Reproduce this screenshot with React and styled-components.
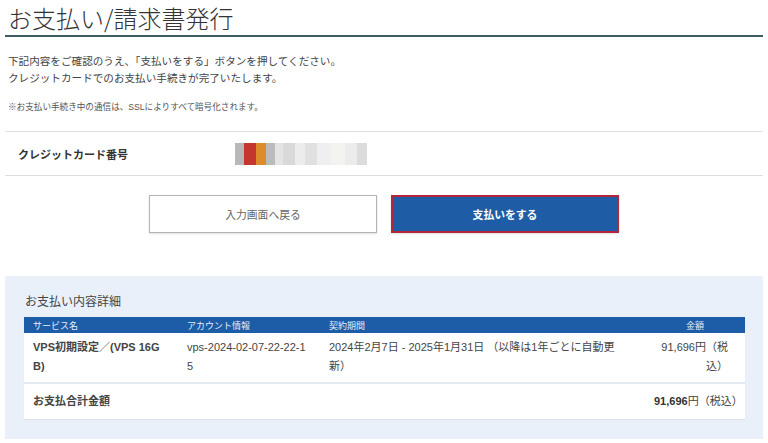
import React from 'react'
import styled, { createGlobalStyle } from 'styled-components';

const Global = createGlobalStyle`
body {
  margin: 0;
  background: #fff;
  font-family: "Liberation Sans", "Noto Sans CJK JP", sans-serif;
  color: #333;
}
`;

const Page = styled.div`
width: 758px;
margin-left: 5px;
padding-top: 3px;
`;
const Title = styled.h1`
margin: 0;
padding: 0 0 2px 3px;
font-size: 24px;
font-weight: 300;
line-height: 30px;
color: #333;
border-bottom: 2px solid #3f5e61;
font-family: "Noto Sans CJK JP", sans-serif;
`;
const Lead = styled.p`
margin: 16px 0 0 3px;
font-size: 10.6px;
line-height: 17px;
color: #444;
`;
const Note = styled.p`
margin: 13px 0 0 3px;
font-size: 8.6px;
line-height: 14px;
color: #555;
`;
const InfoRow = styled.div`
margin-top: 17px;
height: 43px;
display: flex;
align-items: center;
border-top: 1px solid #dedede;
border-bottom: 1px solid #dedede;
`;
const Label = styled.div`
width: 217px;
padding-left: 13px;
font-size: 11px;
font-weight: bold;
color: #333;
`;
const Blur = styled.div`
display: flex;
height: 22px;
filter: blur(0.6px);
`;
const Swatch = styled.span`
width: ${p => p.w}px;
background: ${p => p.c};
`;
const Actions = styled.div`
display: flex;
justify-content: center;
gap: 14px;
margin-top: 19px;
`;
const Button = styled.button`
width: 228px;
height: 38px;
font-family: inherit;
font-size: 10.8px;
cursor: pointer;
border: ${p => p.primary ? '2px solid #b2253c' : '1px solid #b3b3b3'};
background: ${p => p.primary ? '#1e5ca5' : '#fff'};
color: ${p => p.primary ? '#fff' : '#666'};
font-weight: ${p => p.primary ? 'bold' : 'normal'};
box-shadow: 0 1px 2px rgba(0,0,0,0.12);
`;
const Panel = styled.section`
margin-top: 43px;
background: #e9f0f9;
padding: 18px 18px 20px 19px;
`;
const PanelTitle = styled.h2`
margin: 0 0 7px 1px;
font-size: 12px;
font-weight: normal;
line-height: 16px;
color: #444;
`;
const Table = styled.table`
width: 100%;
border-collapse: collapse;
background: #fff;
table-layout: fixed;
box-shadow: 0 1px 1px rgba(0,0,0,0.06);
`;
const Col = styled.col`
width: ${p => p.w ? p.w + 'px' : 'auto'};
`;
const Th = styled.th`
background: #1d5ca6;
color: #e6eefa;
font-size: 9px;
font-weight: normal;
height: 16px;
padding: 0 9px;
text-align: ${p => p.right ? 'center' : 'left'};
`;
const Td = styled.td`
padding: ${p => p.pad || '5px'} ${p => p.right ? '17px' : (p.pr || '9px')} ${p => p.pad || '6px'} 9px;
font-size: 11px;
line-height: 19px;
color: #444;
vertical-align: top;
text-align: ${p => p.right ? 'right' : 'left'};
font-weight: ${p => p.bold ? 'bold' : 'normal'};
word-break: break-all;
`;
const Tr = styled.tr`
border-top: ${p => p.sep ? '2px solid #e4eaf2' : 'none'};
`;
const Strong = styled.b`
font-weight: bold;
color: #333;
`;

const card = [
  [9, '#b8b8b8'], [12, '#c3372c'], [10, '#dc8c2b'], [9, '#b9bbbd'],
  [8, '#e4e4e4'], [12, '#d9d9d9'], [10, '#ececec'], [12, '#e0e0e0'],
  [14, '#efefef'], [14, '#f3f3f0'], [12, '#ececec'], [10, '#dcdcdc'],
];

const App = () => {
  return (
    <Page>
      <Global />
      <Title>お支払い/請求書発行</Title>
      <Lead>
        下記内容をご確認のうえ、「支払いをする」ボタンを押してください。<br />
        クレジットカードでのお支払い手続きが完了いたします。
      </Lead>
      <Note>※お支払い手続き中の通信は、SSLによりすべて暗号化されます。</Note>
      <InfoRow>
        <Label>クレジットカード番号</Label>
        <Blur>
          {card.map(([w, c], i) => <Swatch key={i} w={w} c={c} />)}
        </Blur>
      </InfoRow>
      <Actions>
        <Button>入力画面へ戻る</Button>
        <Button primary>支払いをする</Button>
      </Actions>
      <Panel>
        <PanelTitle>お支払い内容詳細</PanelTitle>
        <Table>
          <colgroup>
            <Col w={154} />
            <Col w={142} />
            <Col />
            <Col w={100} />
          </colgroup>
          <thead>
            <tr>
              <Th>サービス名</Th>
              <Th>アカウント情報</Th>
              <Th>契約期間</Th>
              <Th right>金額</Th>
            </tr>
          </thead>
          <tbody>
            <Tr>
              <Td bold pr="18px">VPS初期設定／(VPS 16GB)</Td>
              <Td>vps-2024-02-07-22-22-15</Td>
              <Td pr="24px">2024年2月7日 - 2025年1月31日 （以降は1年ごとに自動更新）</Td>
              <Td right>91,696円（税込）</Td>
            </Tr>
            <Tr sep>
              <Td bold pad="8px">お支払合計金額</Td>
              <Td pad="8px" />
              <Td pad="8px" />
              <Td right pad="8px" style={{ whiteSpace: 'nowrap' }}><Strong>91,696</Strong>円（税込）</Td>
            </Tr>
          </tbody>
        </Table>
      </Panel>
    </Page>
  )
}

export default App
